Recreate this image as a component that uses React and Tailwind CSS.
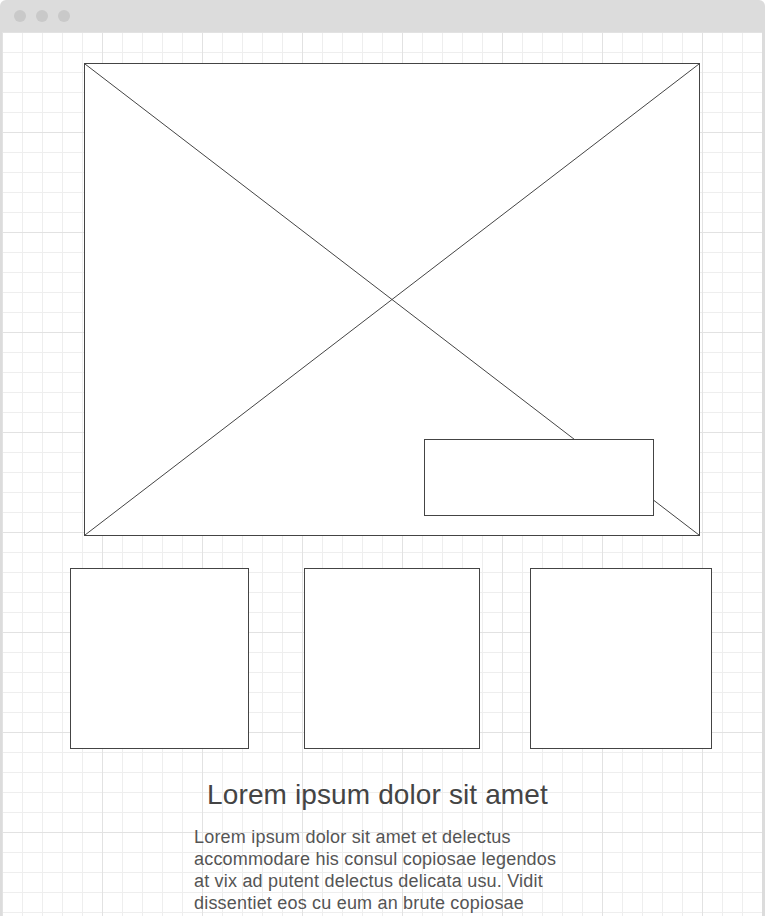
export default function App() {
  const thumbs = [
    { w: 'w-[179px]', ml: 'ml-[68px]' },
    { w: 'w-[176px]', ml: 'ml-[55px]' },
    { w: 'w-[182px]', ml: 'ml-[50px]' },
  ];

  return (
    <div className="h-[916px] w-[765px] overflow-hidden rounded-t-[6px] bg-[#dcdcdc] px-[2px] font-[family-name:'Liberation_Sans',Arial,sans-serif]">
      {/* title bar */}
      <div className="flex h-[32px] items-center gap-[10px] pl-[12px]">
        <span className="h-[12px] w-[12px] rounded-full bg-[#c9c9c9]" />
        <span className="h-[12px] w-[12px] rounded-full bg-[#c9c9c9]" />
        <span className="h-[12px] w-[12px] rounded-full bg-[#c9c9c9]" />
      </div>

      {/* canvas */}
      <div className="h-[884px] w-[760px] bg-white bg-[linear-gradient(to_right,#e2e2e2_1px,transparent_1px),linear-gradient(#e2e2e2_1px,transparent_1px),linear-gradient(to_right,#eeeeee_1px,transparent_1px),linear-gradient(#eeeeee_1px,transparent_1px)] bg-[size:100px_100px,100px_100px,20px_20px,20px_20px] pt-[31px]">
        {/* hero image placeholder */}
        <div className="relative ml-[82px] h-[473px] w-[616px] border border-[#444] bg-white">
          <svg className="absolute inset-0 h-full w-full" viewBox="0 0 614 471" preserveAspectRatio="none">
            <line x1="0" y1="0" x2="614" y2="471" stroke="#444" strokeWidth="1" vectorEffect="non-scaling-stroke" />
            <line x1="614" y1="0" x2="0" y2="471" stroke="#444" strokeWidth="1" vectorEffect="non-scaling-stroke" />
          </svg>
          <div className="absolute left-[339px] top-[375px] h-[77px] w-[230px] border border-[#444] bg-white" />
        </div>

        {/* thumbnails */}
        <div className="mt-[32px] flex">
          {thumbs.map((t, i) => (
            <div key={i} className={`h-[181px] border border-[#444] bg-white ${t.w} ${t.ml}`} />
          ))}
        </div>

        <h1 className="mt-[30px] pr-[9px] text-center text-[28px] leading-[32px] tracking-[0.12px] text-[#444]">
          Lorem ipsum dolor sit amet
        </h1>
        <p className="ml-[192px] mt-[15px] w-[372px] text-[18px] leading-[22px] tracking-[0.2px] text-[#555]">
          Lorem ipsum dolor sit amet et delectus accommodare his consul copiosae legendos at vix ad putent delectus delicata usu. Vidit dissentiet eos cu eum an brute copiosae
        </p>
      </div>
    </div>
  );
}
